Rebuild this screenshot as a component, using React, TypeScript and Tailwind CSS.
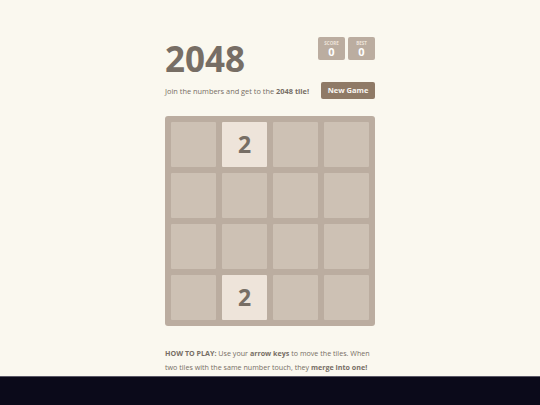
import React from 'react';

const board = [
  [0, 2, 0, 0],
  [0, 0, 0, 0],
  [0, 0, 0, 0],
  [0, 2, 0, 0],
];

const font = { fontFamily: '"Open Sans", "Noto Sans", Arial, sans-serif' };

const ScoreBox = ({ label, value }: { label: string; value: number }) => (
  <div className="flex flex-col items-center justify-center bg-[#bbada0] rounded-[2px] h-[23px] px-[5px] min-w-[27px]">
    <span className="text-[4.5px] leading-[6px] font-bold uppercase text-[#eee4da]">{label}</span>
    <span className="text-[11px] leading-[12px] font-bold text-white">{value}</span>
  </div>
);

const App = () => {
  return (
    <div className="h-screen flex flex-col bg-[#faf8ef] text-[#776e65]" style={font}>
      <div className="flex-1 overflow-hidden">
        <div className="w-[210px] mx-auto pt-[37px]">
          <div className="flex justify-between items-start">
            <h1 className="text-[35px] leading-[40px] font-bold mt-[2px]">2048</h1>
            <div className="flex gap-[3px]">
              <ScoreBox label="Score" value={0} />
              <ScoreBox label="Best" value={0} />
            </div>
          </div>
          <div className="flex justify-between items-center mt-[3px]">
            <p className="text-[7.4px] leading-[12px]">
              Join the numbers and get to the <strong>2048 tile!</strong>
            </p>
            <button className="bg-[#8f7a66] text-[#f9f6f2] text-[7.5px] font-bold rounded-[2px] h-[17px] w-[54px]">
              New Game
            </button>
          </div>
          <div className="mt-[17px] bg-[#bbada0] rounded-[3px] p-[6px] grid grid-cols-4 gap-[6px]">
            {board.flat().map((v, i) => (
              <div
                key={i}
                className={
                  v
                    ? 'h-[45px] rounded-[1px] bg-[#eee4da] flex items-center justify-center text-[23px] font-bold'
                    : 'h-[45px] rounded-[1px] bg-[#cdc1b4]'
                }
              >
                {v ? v : null}
              </div>
            ))}
          </div>
          <p className="mt-[20px] text-[7.15px] leading-[14px] text-[#776e65]">
            <strong>HOW TO PLAY:</strong> Use your <strong>arrow keys</strong> to move the tiles. When
            two tiles with the same number touch, they <strong>merge into one!</strong>
          </p>
        </div>
      </div>
      <div className="h-[29px] bg-[#0b0a1a] border-t border-[#5a5866]" />
    </div>
  );
};

export default App;
